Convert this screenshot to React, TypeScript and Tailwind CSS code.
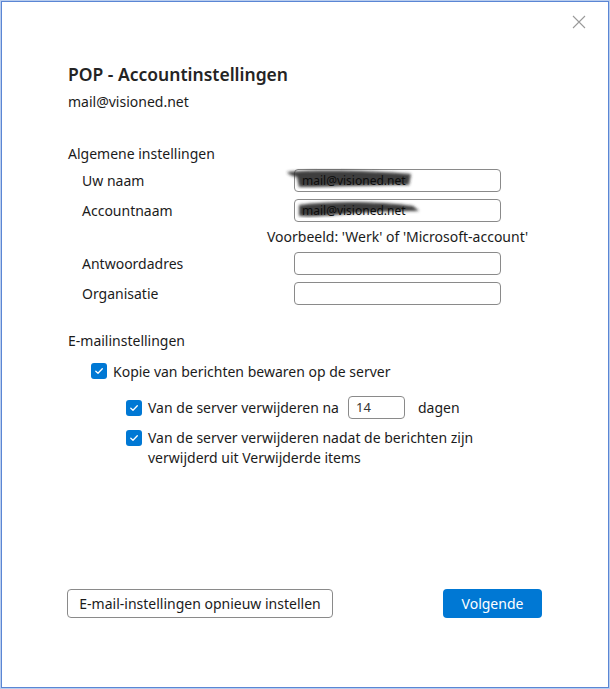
import React from "react";

const font = { fontFamily: '"Noto Sans", "Open Sans", sans-serif' };

const Check = ({ className = "" }: { className?: string }) => (
  <span className={"flex h-4 w-4 shrink-0 items-center justify-center rounded-[3px] bg-[#0078d4] " + className}>
    <svg width="10" height="10" viewBox="0 0 10 10" fill="none">
      <path d="M1.8 5.2 L4 7.3 L8.3 2.8" stroke="white" strokeWidth="1.3" strokeLinecap="round" strokeLinejoin="round" />
    </svg>
  </span>
);

// scribbled-over value (the screenshot has the name blacked out by hand)
const Scribbled = ({ wide }: { wide?: boolean }) => (
  <div className="relative h-[23px] w-[207px] rounded-[4px] border border-[#8a8a8a] bg-white">
    <svg className="absolute left-[-10px] top-[-3px]" width="150" height="28" viewBox="0 0 150 28">
      <defs>
        <filter id={wide ? "b2" : "b1"}>
          <feGaussianBlur stdDeviation="1.4" />
        </filter>
      </defs>
      <path
        d={
          wide
            ? "M14 8 C50 3 100 5 128 9 L134 14 C110 14 80 15 60 17 C40 19 25 20 14 19 Z"
            : "M2 5 C40 2 90 4 126 7 L124 18 C90 18 50 20 14 20 L12 10 C8 9 4 8 2 5 Z"
        }
        fill="#2a2a2a"
        fillOpacity="0.9"
        filter={wide ? "url(#b2)" : "url(#b1)"}
      />
    </svg>
    <span className="absolute left-[7px] top-[3px] text-[12px] leading-[15px] text-[#0d0d0d]">mail@visioned.net</span>
  </div>
);

const Field = () => <div className="h-[23px] w-[207px] rounded-[4px] border border-[#8a8a8a] bg-white" />;

const Row = ({ label, children }: { label: string; children: React.ReactNode }) => (
  <div className="flex h-[23px] items-center">
    <span className="w-[226px] pl-[14px]">{label}</span>
    {children}
  </div>
);

export default function App() {
  return (
    <div className="h-[689px] w-[610px] bg-[#b9cdee] pl-px pt-px text-[14px] text-[#1b1b1b]" style={font}>
      <div className="flex h-[687px] w-[608px] flex-col border border-[#5b86d4] bg-white pl-[66px]">
        <div className="flex justify-end pr-[21px] pt-[12px]">
          <svg width="16" height="16" viewBox="0 0 16 16">
            <path d="M2 2 L14 14 M14 2 L2 14" stroke="#9a9a9a" strokeWidth="1.1" />
          </svg>
        </div>

        <h1 className="mt-[32px] text-[17.5px] font-semibold leading-[24px] text-[#242424]">POP - Accountinstellingen</h1>
        <p className="mt-[6px] leading-[20px]">mail@visioned.net</p>

        <p className="mt-[32px] leading-[20px]">Algemene instellingen</p>
        <div className="mt-[5px] flex flex-col">
          <Row label="Uw naam">
            <Scribbled />
          </Row>
          <div className="mt-[7px]">
            <Row label="Accountnaam">
              <Scribbled wide />
            </Row>
          </div>
          <p className="ml-[199px] mt-[5px] leading-[20px]">Voorbeeld: 'Werk' of 'Microsoft-account'</p>
          <div className="mt-[5px]">
            <Row label="Antwoordadres">
              <Field />
            </Row>
          </div>
          <div className="mt-[7px]">
            <Row label="Organisatie">
              <Field />
            </Row>
          </div>
        </div>

        <p className="mt-[26px] leading-[20px]">E-mailinstellingen</p>
        <div className="ml-[23px] mt-[10px] flex h-[20px] items-center gap-[6px]">
          <Check />
          <span>Kopie van berichten bewaren op de server</span>
        </div>
        <div className="ml-[58px] mt-[15px] flex h-[23px] items-center">
          <Check />
          <span className="ml-[6px]">Van de server verwijderen na</span>
          <div className="ml-[9px] flex h-[23px] w-[57px] items-center rounded-[4px] border border-[#8a8a8a] pl-[7px] text-[13px] text-[#333]">
            14
          </div>
          <span className="ml-[13px]">dagen</span>
        </div>
        <div className="ml-[58px] mt-[9px] flex items-start gap-[6px]">
          <Check className="mt-[2px]" />
          <span className="leading-[20px]">
            Van de server verwijderen nadat de berichten zijn
            <br />
            verwijderd uit Verwijderde items
          </span>
        </div>

        <div className="ml-[-1px] mt-[121px] flex w-[475px] items-center justify-between">
          <button className="h-[29px] w-[266px] rounded-[4px] border border-[#8a8a8a] bg-white text-[14px] text-[#1b1b1b]">
            E-mail-instellingen opnieuw instellen
          </button>
          <button className="h-[29px] w-[99px] rounded-[4px] bg-[#0078d4] text-[14px] text-white">Volgende</button>
        </div>
      </div>
    </div>
  );
}
